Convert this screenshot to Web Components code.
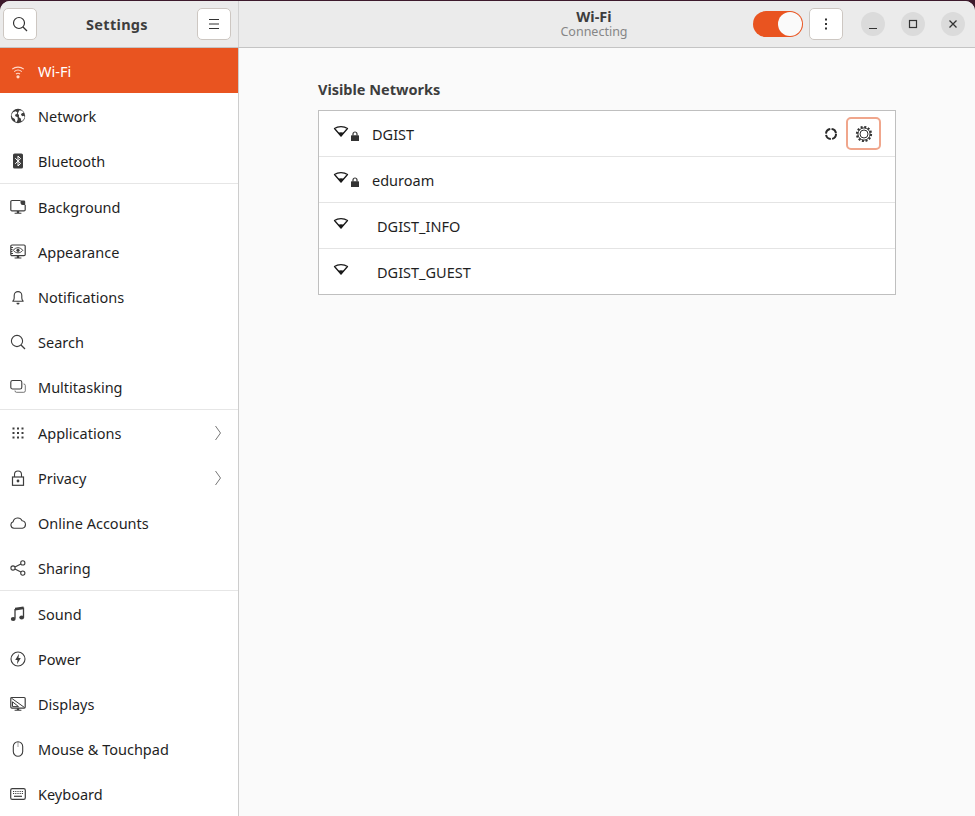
<!DOCTYPE html>
<html>
<head>
<meta charset="utf-8">
<title>Settings</title>
<style>
  html, body { margin: 0; height: 100%; background: #fafafa; }
  body { overflow: hidden; font-family: "Noto Sans", sans-serif; }
</style>
</head>
<body>
<settings-window></settings-window>
<script>
const ICONS = {
  wifi: '<path d="M2.2 6.2a9 9 0 0 1 11.6 0M4.2 8.6a6 6 0 0 1 7.6 0M6 11a3.2 3.2 0 0 1 4 0" fill="none" stroke="currentColor" stroke-width="1.1"/><circle cx="8" cy="13.8" r="1.6" fill="currentColor"/>',
  globe: '<circle cx="8" cy="8" r="7.2" fill="currentColor"/><path d="M3 4.2l2.6-.9 1.6 1-.5 1.8-1.7.6.4 1.6 2.2 1 .1 2.3-1 2.4-1.2-.3-.7-2.7-2.4-1.6-1-2.3zM9.5 2.2l2.6.5 1.6 2-1.9.6-.9 1.4 1.4 1.5 1.9-.4.4 1.7-1.6 2.7-1.7 1-.5-2.7-1.9-1.2.1-2.2-1.2-1.4.8-1.9z" fill="#fff"/>',
  bluetooth: '<rect x="3" y="0.5" width="10" height="15" rx="1.6" fill="currentColor"/><path d="M5.2 5.2L10.6 10.4 8 13V3l2.6 2.6L5.2 10.8" fill="none" stroke="#fff" stroke-width="1"/>',
  background: '<path d="M10.5 1.5H2a1.2 1.2 0 0 0-1.2 1.2v8A1.2 1.2 0 0 0 2 11.9h12a1.2 1.2 0 0 0 1.2-1.2V6" fill="none" stroke="currentColor" stroke-width="1.2"/><path d="M10.5 1.5h3.5a1.2 1.2 0 0 1 1.2 1.2V6h-2.5a2.2 2.2 0 0 1-2.2-2.2z" fill="currentColor"/><path d="M6.8 12h2.4v1.8h2.2v1H4.600v-1h2.200z" fill="currentColor"/>',
  appearance: '<rect x="0.8" y="1" width="14.4" height="10.600" rx="1.200" fill="none" stroke="currentColor" stroke-width="1.200"/><path d="M3.200 6.300c2.600-3.400 7-3.400 9.600 0-2.600 3.400-7 3.400-9.600 0z" fill="none" stroke="currentColor"/><circle cx="8" cy="6.300" r="1.600" fill="currentColor"/><path d="M1 3.500h2M1 5.500h1.500M1 7.500h1.500M1 9.500h2" stroke="currentColor"/><path d="M6.800 11.800h2.400v1.800h2.200v1H4.600v-1h2.200z" fill="currentColor"/>',
  bell: '<path d="M2.800 12.200c1-.9 1.400-1.700 1.400-3.200V6.400a3.800 3.800 0 0 1 7.600 0V9c0 1.500.4 2.300 1.400 3.200z" fill="none" stroke="currentColor" stroke-width="1.100" stroke-linejoin="round"/><path d="M6.600 13.800h2.800v.4a1.400 1.400 0 0 1-2.800 0z" fill="currentColor"/>',
  search: '<circle cx="7" cy="7" r="5.600" fill="none" stroke="currentColor" stroke-width="1.100"/><path d="M11 11l4 4" stroke="currentColor" stroke-width="1.200"/>',
  multitask: '<rect x="0.800" y="1.500" width="11" height="8.500" rx="1.800" fill="none" stroke="currentColor" stroke-width="1.100"/><path d="M13.500 5h.3a1.500 1.500 0 0 1 1.500 1.500v5.300a1.500 1.500 0 0 1-1.500 1.500H6.500A1.500 1.500 0 0 1 5 11.800v-.3" fill="none" stroke="currentColor" stroke-width="1" opacity=".7"/>',
  apps: '<g fill="currentColor"><rect x="2.500" y="2.500" width="2" height="2"/><rect x="7" y="2.500" width="2" height="2"/><rect x="11.500" y="2.500" width="2" height="2"/><rect x="2.500" y="7" width="2" height="2"/><rect x="7" y="7" width="2" height="2"/><rect x="11.500" y="7" width="2" height="2"/><rect x="2.500" y="11.500" width="2" height="2"/><rect x="7" y="11.500" width="2" height="2"/><rect x="11.500" y="11.500" width="2" height="2"/></g>',
  privacy: '<path d="M4.500 7V4.500a3.500 3.500 0 0 1 7 0V7" fill="none" stroke="currentColor" stroke-width="1.100"/><rect x="2.500" y="7" width="11" height="8.300" fill="none" stroke="currentColor" stroke-width="1.200"/><circle cx="8" cy="11" r="1.400" fill="currentColor"/>',
  cloud: '<path d="M4 13.200a3.300 3.300 0 0 1-.9-6.400 4.800 4.800 0 0 1 9-1.100 3.800 3.800 0 0 1 .3 7.500z" fill="none" stroke="currentColor" stroke-width="1.100" stroke-linejoin="round"/>',
  share: '<g fill="none" stroke="currentColor" stroke-width="1.100"><circle cx="3" cy="8" r="2.100"/><circle cx="12.800" cy="2.900" r="2.100"/><circle cx="12.800" cy="13.100" r="2.100"/><path d="M4.900 7l6-3.100M4.900 9l6 3.100"/></g>',
  sound: '<path d="M5 3v9.500M13.500 1.500V11" stroke="currentColor" stroke-width="1.300" fill="none"/><path d="M5 1.800l8.500-1.300v2.800L5 4.600z" fill="currentColor"/><ellipse cx="3.200" cy="13" rx="2.400" ry="2" fill="currentColor"/><ellipse cx="11.700" cy="11.500" rx="2.400" ry="2" fill="currentColor"/>',
  power: '<circle cx="8" cy="8" r="7" fill="none" stroke="currentColor" stroke-width="1.100"/><path d="M9 2.800L5.200 9h2.300l-.5 4.200L10.800 7H8.500z" fill="currentColor"/>',
  displays: '<path d="M1.800 1.500h12.400a1 1 0 0 1 1 1v8.600a1 1 0 0 1-1 1H1.800a1 1 0 0 1-1-1V2.500a1 1 0 0 1 1-1z" fill="none" stroke="currentColor" stroke-width="1.200"/><path d="M1.500 2.200L14.500 11.500" stroke="currentColor" stroke-width="1"/><path d="M2.500 5.800l6 4.800h-6z" fill="none" stroke="currentColor" stroke-width="1"/><path d="M6.800 12.200h2.400v1.600h2.200v1H4.600v-1h2.200z" fill="currentColor"/>',
  mouse: '<rect x="3.300" y="0.800" width="9.400" height="14.400" rx="4.700" fill="none" stroke="currentColor" stroke-width="1.100"/><path d="M8 1v5" stroke="currentColor" stroke-width=".8" opacity=".6"/>',
  keyboard: '<rect x="0.700" y="2.700" width="14.600" height="10.600" rx="1.600" fill="none" stroke="currentColor" stroke-width="1.200"/><path d="M3 5.500h10M3 7.500h10" stroke="currentColor" stroke-width="1.100" stroke-dasharray="1 .8"/><path d="M4 10.300h8" stroke="currentColor" stroke-width="1.200"/>'
};

class SvgIcon extends HTMLElement {
  connectedCallback() {
    const size = this.getAttribute('size') || 16;
    const name = this.getAttribute('name');
    this.attachShadow({ mode: 'open' });
    this.shadowRoot.innerHTML = `
      <style>
        :host { display: inline-flex; flex: none; width: ${size}px; height: ${size}px; }
        svg { width: 100%; height: 100%; display: block; }
      </style>
      <svg viewBox="0 0 16 16">${ICONS[name] || ''}</svg>`;
  }
}
customElements.define('svg-icon', SvgIcon);

class HeaderButton extends HTMLElement {
  constructor() {
    super();
    this.attachShadow({ mode: 'open' });
    this.shadowRoot.innerHTML = `
      <style>
        :host {
          display: flex; align-items: center; justify-content: center; flex: none;
          width: 34px; height: 32px; box-sizing: border-box;
          background: #fff; border: 1px solid #cdc7c2; border-radius: 5px;
          color: #3d3d3d;
        }
      </style>
      <slot></slot>`;
  }
}
customElements.define('header-button', HeaderButton);

class WindowButton extends HTMLElement {
  constructor() {
    super();
    this.attachShadow({ mode: 'open' });
    this.shadowRoot.innerHTML = `
      <style>
        :host {
          display: flex; align-items: center; justify-content: center; flex: none;
          width: 24px; height: 24px; border-radius: 50%;
          background: #dbdbdb; color: #3d3d3d;
        }
        svg { width: 16px; height: 16px; display: block; }
      </style>
      <slot></slot>`;
  }
}
customElements.define('window-button', WindowButton);

class SidebarRow extends HTMLElement {
  constructor() {
    super();
    this.attachShadow({ mode: 'open' });
  }
  connectedCallback() {
    const selected = this.hasAttribute('selected');
    const arrow = this.hasAttribute('arrow');
    this.shadowRoot.innerHTML = `
      <style>
        :host {
          display: flex; align-items: center; box-sizing: border-box;
          height: 45px; padding: 0 17px 0 10px;
          color: ${selected ? '#fff' : '#1f1f1f'};
          background: ${selected ? '#e95420' : 'transparent'};
          font-size: 14.5px;
        }
        :host([divider]) { height: 46px; border-bottom: 1px solid #e6e6e6; }
        .icon { width: 16px; height: 16px; margin-right: 12px; color: ${selected ? '#ffd9ca' : '#3d3d3d'}; }
        .label { flex: 1; }
        .arrow { width: 6px; height: 16px; }
      </style>
      <svg-icon class="icon" name="${this.getAttribute('icon')}"></svg-icon>
      <span class="label"><slot></slot></span>
      ${arrow ? '<svg class="arrow" viewBox="0 0 6 16"><path d="M.5 1l5 7-5 7" fill="none" stroke="#777" stroke-width="1"/></svg>' : ''}`;
  }
}
customElements.define('sidebar-row', SidebarRow);

class SettingsSidebar extends HTMLElement {
  constructor() {
    super();
    this.attachShadow({ mode: 'open' });
    this.shadowRoot.innerHTML = `
      <style>
        :host {
          display: flex; flex-direction: column; flex: none;
          width: 239px; box-sizing: border-box;
          background: #fff; border-right: 1px solid #cdcdcd;
          overflow: hidden;
        }
      </style>
      <slot></slot>`;
  }
}
customElements.define('settings-sidebar', SettingsSidebar);

class NetworkRow extends HTMLElement {
  constructor() {
    super();
    this.attachShadow({ mode: 'open' });
  }
  connectedCallback() {
    const locked = this.hasAttribute('locked');
    this.shadowRoot.innerHTML = `
      <style>
        :host {
          display: flex; align-items: center; box-sizing: border-box;
          height: 46px; padding: 0 14px 0 14px;
          border-bottom: 1px solid #e4e4e4;
          font-size: 14.5px; color: #1f1f1f;
        }
        :host(:last-child) { border-bottom: none; height: 45px; }
        .signal { width: 16px; height: 16px; flex: none; margin-top: -3px; }
        .lock { width: 10px; height: 10px; flex: none; margin: 5px 0 0 1px; }
        .name { flex: 1; margin-left: ${locked ? '12px' : '28px'}; }
        .actions { display: flex; align-items: center; gap: 8px; }
      </style>
      <svg class="signal" viewBox="0 0 16 16">
        <path d="M1.500 4.500C5 2 11 2 14.500 4.500L8 12z" fill="none" stroke="#1a1a1a" stroke-width="1.300" stroke-linejoin="round"/>
        <path d="M5 8.800c1.800-.9 4.200-.9 6 0L8 12.600z" fill="#1a1a1a"/>
      </svg>
      ${locked ? `<svg class="lock" viewBox="0 0 10 10">
        <path d="M3 4.500V3a2 2 0 0 1 4 0v1.500" fill="none" stroke="#333" stroke-width="1.200"/>
        <rect x="1" y="4.300" width="8" height="5.700" rx=".6" fill="#333"/>
      </svg>` : ''}
      <span class="name"><slot></slot></span>
      <span class="actions"><slot name="actions"></slot></span>`;
  }
}
customElements.define('network-row', NetworkRow);

class NetworkList extends HTMLElement {
  constructor() {
    super();
    this.attachShadow({ mode: 'open' });
    this.shadowRoot.innerHTML = `
      <style>
        :host {
          display: block; box-sizing: border-box; width: 578px;
          margin: 0 0 0 79px;
          background: #fff; border: 1px solid #bfbfbf;
        }
      </style>
      <slot></slot>`;
  }
}
customElements.define('network-list', NetworkList);

class ToggleSwitch extends HTMLElement {
  constructor() {
    super();
    this.attachShadow({ mode: 'open' });
    this.shadowRoot.innerHTML = `
      <style>
        :host {
          display: flex; align-items: center; justify-content: flex-end; flex: none;
          width: 50px; height: 26px; box-sizing: border-box; padding: 1px;
          background: #e95420; border-radius: 13px;
        }
        i { display: block; width: 24px; height: 24px; border-radius: 50%; background: #fafafa; }
      </style>
      <i></i>`;
  }
}
customElements.define('toggle-switch', ToggleSwitch);

class SettingsWindow extends HTMLElement {
  constructor() {
    super();
    this.attachShadow({ mode: 'open' });
    this.shadowRoot.innerHTML = `
      <style>
        :host {
          display: flex; flex-direction: column; width: 975px; height: 816px;
          background: #3d1a2c; overflow: hidden; position: relative;
        }
        .frame {
          flex: 1; min-height: 0; display: flex; flex-direction: column;
          margin-top: 1px; background: #fafafa; border-radius: 10px 10px 0 0; overflow: hidden;
        }
        .titlebar {
          display: flex; flex: none; height: 47px; box-sizing: border-box;
          background: #ebebeb; border-bottom: 1px solid #c4c4c4;
        }
        .left {
          display: flex; align-items: center; justify-content: space-between;
          box-sizing: border-box; width: 239px; padding: 0 7px 0 3px;
          border-right: 1px solid #d2d2d2;
        }
        .left b { font-size: 14.500px; font-weight: 700; color: #3d3d3d; letter-spacing: .3px; }
        .right { flex: 1; display: flex; align-items: center; padding-right: 10px; position: relative; }
        .heading {
          flex: 1; text-align: center; line-height: 1.1; padding-left: 0; margin-left: 196px; margin-right: 0;
        }
        .heading b { display: block; font-size: 14.500px; color: #3d3d3d; }
        .heading span { display: block; font-size: 12.500px; color: #868686; }
        .controls { display: flex; align-items: center; flex: none; }
        .controls header-button { margin-left: 6px; margin-right: 18px; }
        .wins { display: flex; gap: 16px; }
        .body { flex: 1; min-height: 0; display: flex; }
        .main { flex: 1; padding-top: 31px; }
        h2 {
          margin: 0 0 11px 79px; font-size: 14.500px; font-weight: 700; color: #3d3d3d;
          line-height: 20px;
        }
      </style>
      <div class="frame">
        <div class="titlebar">
          <div class="left">
            <header-button>
              <svg width="16" height="16" viewBox="0 0 16 16"><circle cx="7" cy="7" r="5.500" fill="none" stroke="#333" stroke-width="1.200"/><path d="M11 11l4 4" stroke="#333" stroke-width="1.300"/></svg>
            </header-button>
            <b>Settings</b>
            <header-button>
              <svg width="16" height="16" viewBox="0 0 16 16"><path d="M3 3.500h10M3 8h10M3 12.500h10" stroke="#333" stroke-width="1.100"/></svg>
            </header-button>
          </div>
          <div class="right">
            <div class="heading"><b>Wi-Fi</b><span>Connecting</span></div>
            <div class="controls">
              <toggle-switch></toggle-switch>
              <header-button>
                <svg width="16" height="16" viewBox="0 0 16 16"><g fill="#333"><rect x="7" y="2.500" width="2" height="2"/><rect x="7" y="7" width="2" height="2"/><rect x="7" y="11.500" width="2" height="2"/></g></svg>
              </header-button>
              <div class="wins">
                <window-button><svg width="16" height="16" viewBox="0 0 16 16"><path d="M4 12.500h8" stroke="#333" stroke-width="1.200"/></svg></window-button>
                <window-button><svg width="16" height="16" viewBox="0 0 16 16"><rect x="4.500" y="4.500" width="7" height="7" fill="none" stroke="#333" stroke-width="1.200"/></svg></window-button>
                <window-button><svg width="16" height="16" viewBox="0 0 16 16"><path d="M4.500 4.500l7 7M11.500 4.500l-7 7" stroke="#333" stroke-width="1.300"/></svg></window-button>
              </div>
            </div>
          </div>
        </div>
        <div class="body">
          <settings-sidebar>
            <sidebar-row icon="wifi" selected>Wi-Fi</sidebar-row>
            <sidebar-row icon="globe">Network</sidebar-row>
            <sidebar-row icon="bluetooth" divider>Bluetooth</sidebar-row>
            <sidebar-row icon="background">Background</sidebar-row>
            <sidebar-row icon="appearance">Appearance</sidebar-row>
            <sidebar-row icon="bell">Notifications</sidebar-row>
            <sidebar-row icon="search">Search</sidebar-row>
            <sidebar-row icon="multitask" divider>Multitasking</sidebar-row>
            <sidebar-row icon="apps" arrow>Applications</sidebar-row>
            <sidebar-row icon="privacy" arrow>Privacy</sidebar-row>
            <sidebar-row icon="cloud">Online Accounts</sidebar-row>
            <sidebar-row icon="share" divider>Sharing</sidebar-row>
            <sidebar-row icon="sound">Sound</sidebar-row>
            <sidebar-row icon="power">Power</sidebar-row>
            <sidebar-row icon="displays">Displays</sidebar-row>
            <sidebar-row icon="mouse">Mouse &amp; Touchpad</sidebar-row>
            <sidebar-row icon="keyboard">Keyboard</sidebar-row>
          </settings-sidebar>
          <div class="main">
            <h2>Visible Networks</h2>
            <network-list>
              <network-row locked>DGIST
                <spinner-gear slot="actions"></spinner-gear>
              </network-row>
              <network-row locked>eduroam</network-row>
              <network-row>DGIST_INFO</network-row>
              <network-row>DGIST_GUEST</network-row>
            </network-list>
          </div>
        </div>
      </div>`;
  }
}
customElements.define('settings-window', SettingsWindow);

class SpinnerGear extends HTMLElement {
  constructor() {
    super();
    this.attachShadow({ mode: 'open' });
    this.shadowRoot.innerHTML = `
      <style>
        :host { display: flex; align-items: center; gap: 8px; }
        .gear {
          display: flex; align-items: center; justify-content: center;
          width: 35px; height: 33px; box-sizing: border-box;
          background: #fff; border: 2px solid #f0a68c; border-radius: 5px;
        }
        svg { display: block; }
      </style>
      <svg width="14" height="14" viewBox="0 0 14 14">
        <circle cx="7" cy="7" r="5" fill="none" stroke="#2a2a2a" stroke-width="2" stroke-dasharray="6.500 1.350"/>
      </svg>
      <div class="gear">
        <svg width="18" height="18" viewBox="0 0 18 18">
          <circle cx="9" cy="9" r="7" fill="none" stroke="#333" stroke-width="2.200" stroke-dasharray="2 1.670"/>
          <circle cx="9" cy="9" r="6.100" fill="none" stroke="#333" stroke-width="1"/>
          <circle cx="9" cy="9" r="4" fill="none" stroke="#333" stroke-width="1"/>
        </svg>
      </div>`;
  }
}
customElements.define('spinner-gear', SpinnerGear);
</script>
</body>
</html>
